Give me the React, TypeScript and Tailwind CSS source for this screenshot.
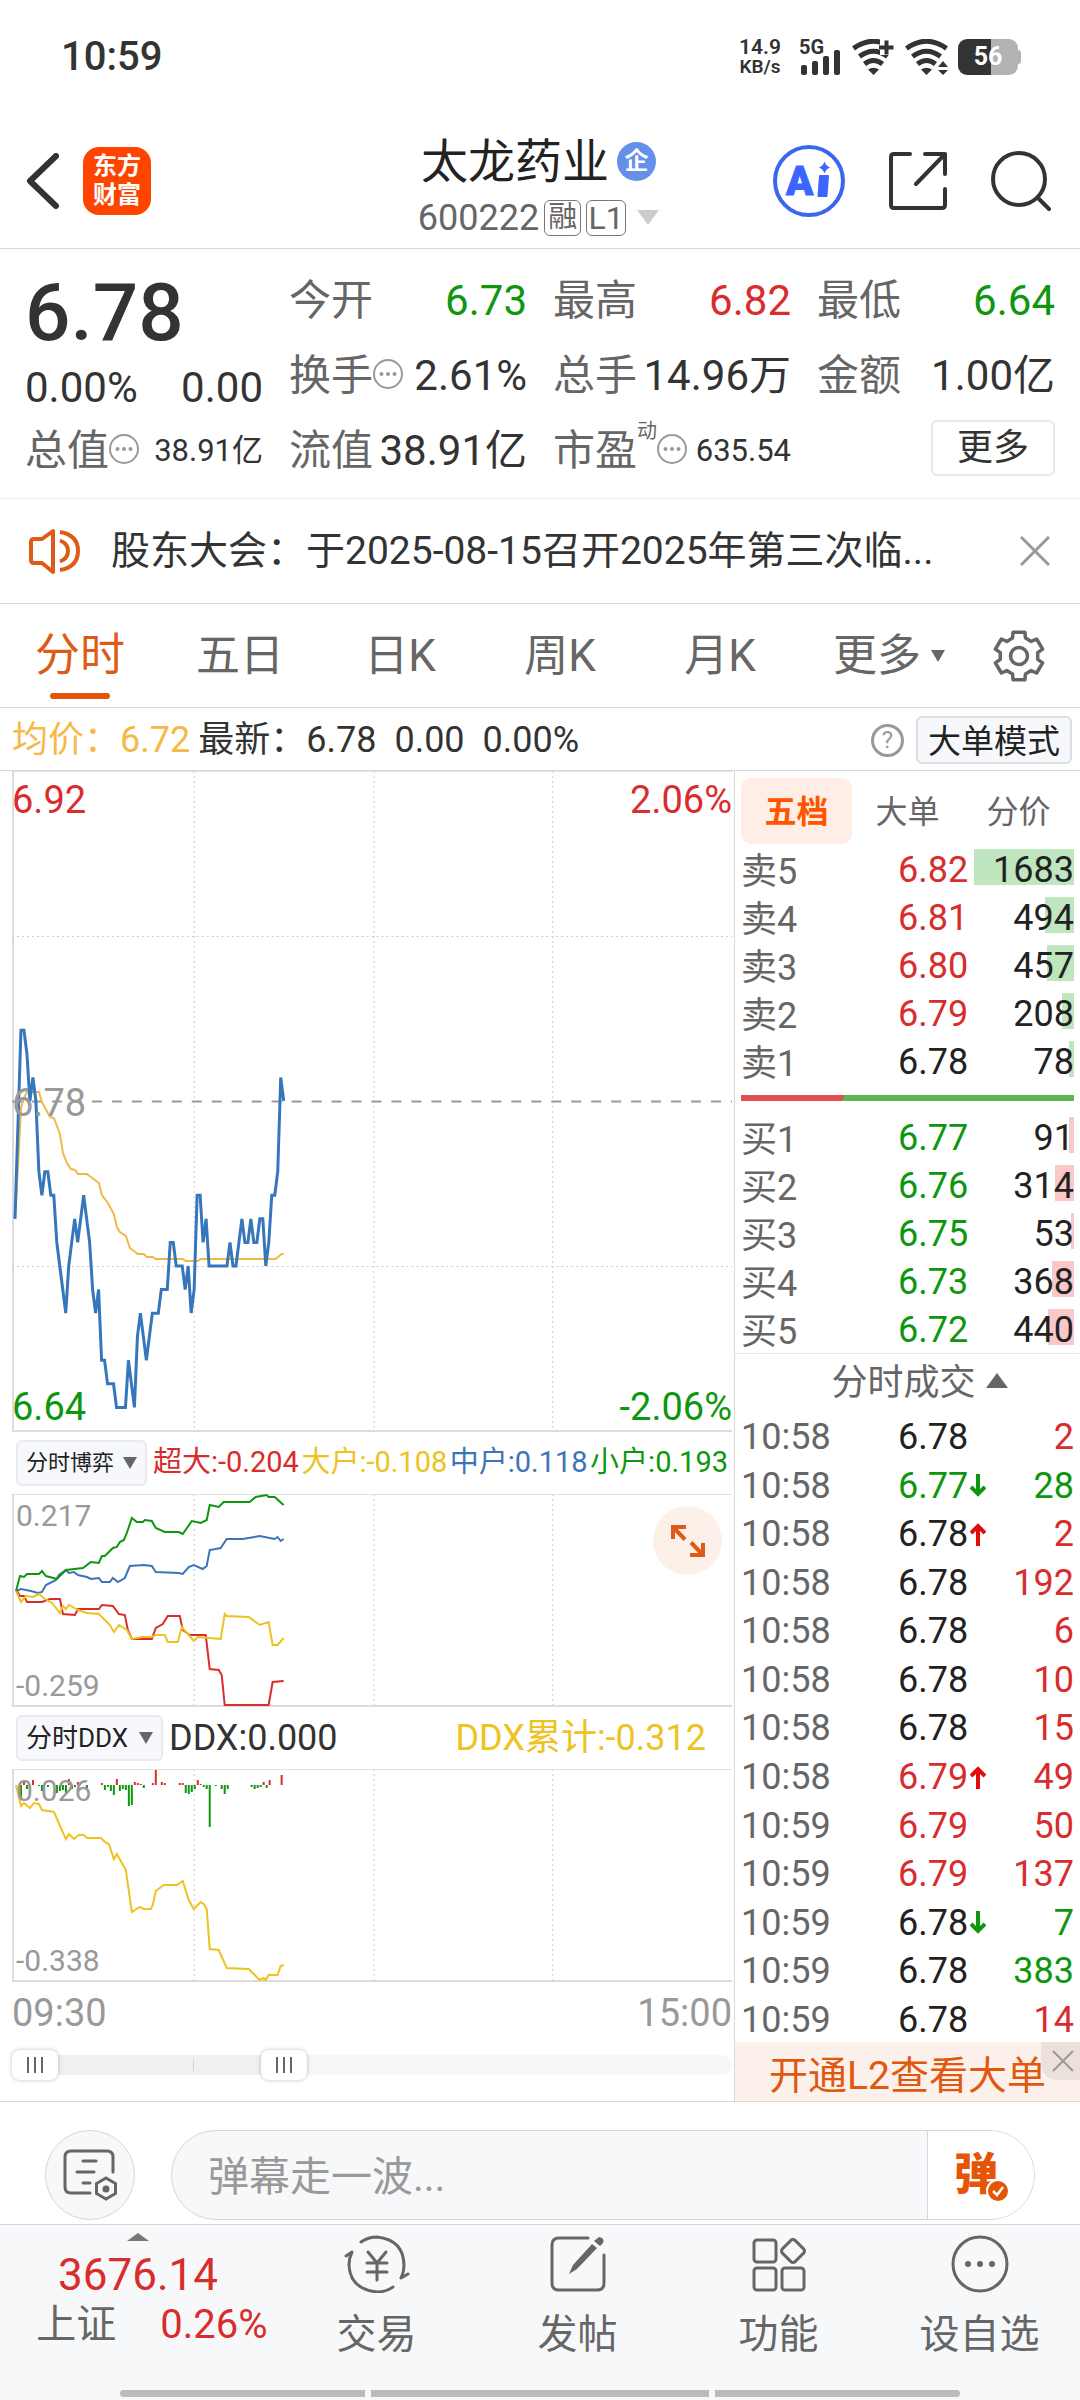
import { useState, type ReactNode } from "react";
import clsx from "clsx";

// cents away from the previous close (6.78), one entry per minute from 09:30
const PRICES = [
  -5, -1, 3, 3, 2, 0, 1, 0, -3, -4, -3, -3, -4, -4, -6, -7, -8, -9, -7, -6,
  -5, -6, -5, -4, -5, -6, -8, -9, -8, -11, -11, -12, -12, -12, -13, -13, -13, -13, -11, -12,
  -13, -10, -9, -10, -11, -10, -9, -9, -9, -8, -8, -8, -6, -6, -7, -7, -7, -8, -7, -9,
  -8, -4, -4, -6, -5, -7, -7, -7, -7, -7, -7, -7, -6, -7, -7, -6, -5, -6, -6, -5,
  -6, -6, -5, -5, -7, -6, -4, -4, -3, 1, 0,
];

const AVG =
  "3,448 6,396 9,337 12,327 15,321 27,321 30,331 38,346 42,347 48,363 51,382 55,392 59,398 63,399 66,403 75,403 87,412 90,424 96,432 102,443 105,456 108,461 114,465 118,477 126,483 132,483 135,486 141,486 144,488 171,488 174,490 186,490 189,488 264,488 270,483 272,483";

const FLOWS = [
  { color: "#3b74b8", points: "4,97 9,95 19,97 26,99 30,98 34,91 44,86 47,81 54,76 57,79 62,78 66,81 75,83 79,85 87,84 90,88 98,88 101,84 106,88 113,84 118,72 132,71 140,72 144,78 167,79 171,80 177,73 182,71 191,75 195,72 198,56 209,54 215,45 231,45 248,42 263,45 266,43 269,47 272,45" },
  { color: "#d92c2c", points: "5,97 8,102 12,102 15,108 30,108 38,105 48,105 51,120 63,121 66,115 87,115 90,111 101,112 107,120 113,121 116,136 120,145 140,145 144,134 151,130 156,122 168,122 171,136 178,141 194,141 198,175 207,176 210,181 213,211 257,211 261,188 272,187" },
  { color: "#eec21f", points: "4,97 9,108 14,102 21,103 27,100 33,105 40,109 48,119 51,112 54,115 57,111 66,116 75,119 87,120 93,126 98,131 102,138 107,131 115,136 120,145 130,143 140,143 144,141 153,141 156,148 166,148 170,133 177,141 182,147 186,143 209,145 213,120 215,122 237,123 248,131 257,128 261,151 266,151 272,144" },
  { color: "#0f960f", points: "4,97 8,82 12,83 15,80 27,80 30,77 34,82 45,85 54,76 71,74 79,68 87,69 90,62 93,62 101,54 105,53 108,48 112,46 115,39 120,24 125,28 131,28 133,26 140,27 144,34 153,38 167,38 171,40 180,27 189,29 195,26 198,11 207,13 212,8 238,8 244,3 255,1 257,3 263,3 272,11" },
];

const DDX_SUM =
  "4,16 9,37 12,34 18,39 22,34 27,35 30,41 42,43 46,52 48,57 54,70 57,65 62,70 67,66 72,66 75,69 89,69 93,73 97,75 102,90 105,85 114,101 120,143 128,138 132,140 139,140 141,136 144,122 152,116 165,116 171,112 177,131 182,140 189,133 192,135 195,140 198,180 207,181 215,199 237,200 243,206 248,211 252,209 254,211 257,206 266,206 269,197 272,196";

// [x, height], negative heights hang below the zero line
const DDX_BARS = [
  [9, -14], [12, 3], [15, -4], [18, -3], [21, 5], [27, -1], [30, -6], [36, -2], [45, -8], [48, -6],
  [51, -5], [54, -8], [57, 6], [60, -4], [63, -2], [66, 3], [75, -3], [90, 2], [93, -5], [96, -2],
  [99, -6], [102, -10], [105, 6], [108, -6], [111, -4], [114, -5], [117, -21], [120, -20], [123, 3],
  [126, 2], [129, 1], [132, -3], [141, 2], [144, 15], [150, 3], [153, 2], [168, 2], [171, 2],
  [174, -8], [177, -9], [180, -7], [183, -4], [186, 5], [189, 1], [192, -2], [195, -4], [198, -42],
  [204, -1], [210, -4], [213, -9], [216, -4], [240, -2], [243, -4], [246, -3], [249, -2], [252, 3],
  [255, -3], [258, 5], [270, 10],
];

const RED = "text-[#d92c2c]";
const GREEN = "text-[#0f960f]";
const DARK = "text-[#222]";

const SELLS = [
  { name: "卖5", price: "6.82", vol: 1683, tone: RED },
  { name: "卖4", price: "6.81", vol: 494, tone: RED },
  { name: "卖3", price: "6.80", vol: 457, tone: RED },
  { name: "卖2", price: "6.79", vol: 208, tone: RED },
  { name: "卖1", price: "6.78", vol: 78, tone: DARK },
];

const BUYS = [
  { name: "买1", price: "6.77", vol: 91, tone: GREEN },
  { name: "买2", price: "6.76", vol: 314, tone: GREEN },
  { name: "买3", price: "6.75", vol: 53, tone: GREEN },
  { name: "买4", price: "6.73", vol: 368, tone: GREEN },
  { name: "买5", price: "6.72", vol: 440, tone: GREEN },
];

const TICKS = [
  { time: "10:58", price: "6.78", vol: 2, tone: DARK, volTone: RED },
  { time: "10:58", price: "6.77", vol: 28, tone: GREEN, volTone: GREEN, dir: "down" },
  { time: "10:58", price: "6.78", vol: 2, tone: DARK, volTone: RED, dir: "up" },
  { time: "10:58", price: "6.78", vol: 192, tone: DARK, volTone: RED },
  { time: "10:58", price: "6.78", vol: 6, tone: DARK, volTone: RED },
  { time: "10:58", price: "6.78", vol: 10, tone: DARK, volTone: RED },
  { time: "10:58", price: "6.78", vol: 15, tone: DARK, volTone: RED },
  { time: "10:58", price: "6.79", vol: 49, tone: RED, volTone: RED, dir: "up" },
  { time: "10:59", price: "6.79", vol: 50, tone: RED, volTone: RED },
  { time: "10:59", price: "6.79", vol: 137, tone: RED, volTone: RED },
  { time: "10:59", price: "6.78", vol: 7, tone: DARK, volTone: GREEN, dir: "down" },
  { time: "10:59", price: "6.78", vol: 383, tone: DARK, volTone: GREEN },
  { time: "10:59", price: "6.78", vol: 14, tone: DARK, volTone: RED },
];

export default function App() {
  return (
    <div className="flex flex-col bg-white font-['Roboto','Noto_Sans_CJK_SC',sans-serif] leading-none text-[#333]">
      <StatusBar />
      <Header />
      <Stats />
      <Notice />
      <PeriodTabs />

      {/* average / latest line */}
      <div className="flex h-[63px] items-center border-b border-[#d8d8d8] pt-0.5 pr-2 pl-3 text-4xl leading-none whitespace-pre">
        <span className="text-[#f5b947]">均价：6.72</span>
        <span className="ml-2">最新：6.78</span>
        <span className="ml-[18px]">0.00</span>
        <span className="ml-[18px]">0.00%</span>
        <button aria-label="帮助" className="ml-auto flex size-[33px] items-center justify-center rounded-full border-3 border-[#999] text-2xl leading-none text-[#999]">
          ?
        </button>
        <button className="ml-3 h-12 rounded-md border-2 border-[#dcdee2] bg-[#f7f8fb] px-2.5 pt-0.5 text-[33px] text-[#222]">
          大单模式
        </button>
      </div>

      <main className="flex">
        <Charts />
        <OrderBook />
      </main>

      <BulletBar />
      <BottomNav />
    </div>
  );
}

function StatusBar() {
  return (
    <div className="flex h-[114px] items-center pr-[59px] pl-[61px]">
      <span className="text-[40px] font-medium">10:59</span>
      <div className="ml-auto flex h-9 items-center">
        <div className="flex flex-col items-center gap-px font-semibold">
          <span className="text-[21px] leading-[19px]">14.9</span>
          <span className="text-[19px] leading-[18px]">KB/s</span>
        </div>
        <div className="relative ml-[18px] h-9 w-[41px]">
          <span className="absolute -top-0.5 left-0 text-xl leading-5 font-bold">5G</span>
          <svg viewBox="0 0 41 36" className="size-full" fill="#333">
            <rect x="2" y="26" width="6" height="10" rx="2" />
            <rect x="13" y="22" width="6" height="14" rx="2" />
            <rect x="24" y="17" width="6" height="19" rx="2" />
            <rect x="35" y="11" width="6" height="25" rx="2" />
          </svg>
        </div>
        <Wifi className="ml-3">
          <path d="M28 0h16v16H28z" fill="#fff" />
          <path d="M27 8.500h14.500M34.500 1.500v14" stroke="#333" strokeWidth="4" />
        </Wifi>
        <Wifi className="ml-[9px]">
          <path d="M32 20h12v16H32z" fill="#fff" />
          <path d="M38 22l5 6H33zM38 36l5-5H33z" fill="#333" />
        </Wifi>
        <div className="ml-[9px] flex items-center">
          <span className="h-9 w-15 rounded-[9px] bg-[linear-gradient(90deg,#333_55%,#b3b3b3_55%)] text-center text-[25px] leading-9 font-bold text-white">
            56
          </span>
          <span className="h-3.5 w-[3px] rounded-r bg-[#b3b3b3]" />
        </div>
      </div>
    </div>
  );
}

function Wifi({ className, children }: { className: string; children: ReactNode }) {
  return (
    <svg viewBox="0 0 44 36" className={clsx("h-9 w-11", className)} fill="none">
      <g stroke="#333" strokeWidth="5">
        <path d="M1.500 9.500Q21.500-5 41.500 9.500" />
        <path d="M7.500 17.500Q21.500 7 35.500 17.500" />
        <path d="M12.500 25Q21.500 18 30.500 25" />
      </g>
      <path d="M16 30.500Q21.500 27 27 30.500L21.500 36z" fill="#333" />
      {children}
    </svg>
  );
}

function Header() {
  return (
    <header className="grid h-[135px] grid-cols-[1fr_auto_1fr] items-center border-b border-[#d8d8d8] pr-[29px] pl-[26px]">
      <div className="flex items-center gap-6">
        <button aria-label="返回">
          <svg viewBox="0 0 33 56" className="h-14 w-[33px]" fill="none" stroke="#333" strokeWidth="6" strokeLinecap="round" strokeLinejoin="round">
            <path d="M30 3 4 28l26 25" />
          </svg>
        </button>
        <div className="flex size-[68px] flex-col items-center justify-center rounded-2xl bg-[#ff4400] text-2xl leading-[29px] font-bold text-white">
          <span>东方</span>
          <span>财富</span>
        </div>
      </div>

      <div className="flex flex-col items-center gap-[15px] pt-[11px]">
        <h1 className="flex items-center gap-2 text-[47px] text-[#222]">
          太龙药业
          <span className="flex size-[39px] items-center justify-center rounded-full bg-[#6590ea] text-2xl font-bold text-white">
            企
          </span>
        </h1>
        <div className="flex h-9 items-center gap-[5px] text-4xl leading-none text-[#666]">
          600222
          <span className="flex h-9 w-[37px] items-center justify-center rounded-md border border-[#777] text-[29px]">融</span>
          <span className="flex h-9 w-10 items-center justify-center rounded-md border border-[#777] text-[32px]">L1</span>
          <svg viewBox="0 0 22 15" className="ml-1.5 h-[15px] w-[22px]" fill="#ccc">
            <path d="M0 0h22L11 15z" />
          </svg>
        </div>
      </div>

      <div className="flex items-center justify-end gap-11">
        <button aria-label="Ai">
          <svg viewBox="0 0 72 74" className="h-[74px] w-[72px]">
            <circle cx="36" cy="37" r="34" fill="none" stroke="#3a66f0" strokeWidth="4" />
            <text x="13" y="51" fontSize="40" fontWeight="900" fill="#3a66ff" stroke="#3a66ff" strokeWidth="1">A</text>
            <path d="M47 32h8L53.500 52h-8z" fill="#3a66ff" stroke="#3a66ff" strokeWidth="2" strokeLinejoin="round" />
            <path d="M51.500 17.500q1.500 4.500 5.500 6-4 1.500-5.500 6-1.500-4.500-5.500-6 4-1.500 5.500-6z" fill="#3a66ff" />
          </svg>
        </button>
        <button aria-label="分享">
          <svg viewBox="0 0 58 60" className="h-[60px] w-[58px]" fill="none" stroke="#333" strokeWidth="4" strokeLinecap="round" strokeLinejoin="round">
            <path d="M21 3H5q-3 0-3 3v48q0 3 3 3h48q3 0 3-3V38M36 3h20v20M56 3 27 33" />
          </svg>
        </button>
        <button aria-label="搜索">
          <svg viewBox="0 0 60 62" className="h-[62px] w-[60px]" fill="none" stroke="#333" strokeWidth="4" strokeLinecap="round">
            <circle cx="28" cy="29" r="26" />
            <path d="m47 48 11 11" />
          </svg>
        </button>
      </div>
    </header>
  );
}

function MoreDot() {
  return (
    <svg viewBox="0 0 30 30" className="mb-1 size-[30px] shrink-0" fill="#999">
      <circle cx="15" cy="15" r="14" fill="none" stroke="#999" strokeWidth="2" />
      <circle cx="8.500" cy="15" r="2" />
      <circle cx="15" cy="15" r="2" />
      <circle cx="21.500" cy="15" r="2" />
    </svg>
  );
}

function Stat({ label, value, tone = "text-[#333]", dot, small }: {
  label: string; value: string; tone?: string; dot?: boolean; small?: boolean;
}) {
  return (
    <div className="flex h-[75px] items-center text-[42px] whitespace-nowrap">
      <span className="text-[#666]">{label}</span>
      {dot && <MoreDot />}
      <span className={clsx("ml-auto", small && "text-[31px]", tone)}>{value}</span>
    </div>
  );
}

function Stats() {
  return (
    <section className="grid h-[250px] grid-cols-4 gap-x-[26px] border-b border-[#eee] px-[25px] pt-[14px]">
      <div>
        <div className="flex h-[100px] items-center text-[80px] font-medium">6.78</div>
        <div className="flex h-[50px] items-center justify-between text-[42px]">
          <span>0.00%</span>
          <span>0.00</span>
        </div>
        <Stat label="总值" value="38.91亿" dot small />
      </div>
      <div>
        <Stat label="今开" value="6.73" tone={GREEN} />
        <Stat label="换手" value="2.61%" dot />
        <Stat label="流值" value="38.91亿" />
      </div>
      <div>
        <Stat label="最高" value="6.82" tone={RED} />
        <Stat label="总手" value="14.96万" />
        <div className="flex h-[75px] items-center text-[42px] whitespace-nowrap">
          <span className="text-[#666]">市盈</span>
          <sup className="top-0 self-start pt-2 text-xl leading-none text-[#666]">动</sup>
          <MoreDot />
          <span className="ml-auto text-[31px]">635.54</span>
        </div>
      </div>
      <div>
        <Stat label="最低" value="6.64" tone={GREEN} />
        <Stat label="金额" value="1.00亿" />
        <div className="flex h-[75px] items-center justify-end pb-1.5">
          <button className="h-14 w-[124px] rounded-md border-2 border-[#e8e8e8] text-4xl leading-none">更多</button>
        </div>
      </div>
    </section>
  );
}

function Notice() {
  return (
    <section className="flex h-[105px] items-center border-b border-[#d8d8d8] pr-[30px] pl-[29px]">
      <svg viewBox="0 0 52 46" className="h-[46px] w-[52px] shrink-0" fill="none" stroke="#dd5b16" strokeWidth="4">
        <path d="M24 3v41l-11-9H5q-3 0-3-3V14q0-3 3-3h8L24 3z" strokeLinejoin="round" />
        <path d="M31 12.500q8 3 8 10.500t-8 10.500M31 4q18 3 18 19T31 42" />
      </svg>
      <p className="ml-[30px] truncate text-[39px] leading-[60px]">股东大会：于2025-08-15召开2025年第三次临...</p>
      <button aria-label="关闭" className="ml-auto">
        <svg viewBox="0 0 30 30" className="size-[30px]" fill="none" stroke="#999" strokeWidth="3">
          <path d="m1 1 28 28M29 1 1 29" />
        </svg>
      </button>
    </section>
  );
}

// six-tooth cog outline
const gearPath = (() => {
  const pt = (deg: number, r: number) => {
    const a = (deg * Math.PI) / 180;
    return `${(26 + r * Math.cos(a)).toFixed(1)} ${(26 + r * Math.sin(a)).toFixed(1)}`;
  };
  const pts: string[] = [];
  for (let i = 0; i < 6; i++) {
    const c = i * 60 - 90;
    pts.push(pt(c - 20, 19), pt(c - 14, 24.5), pt(c + 14, 24.5), pt(c + 20, 19));
  }
  return `M${pts.join("L")}Z`;
})();

function PeriodTabs() {
  const [active, setActive] = useState("分时");
  return (
    <nav className="flex h-[104px] border-b border-[#d8d8d8] pr-[21px] text-[44px] text-[#666]">
      {["分时", "五日", "日K", "周K", "月K"].map(t => (
        <button
          key={t}
          onClick={() => setActive(t)}
          className={clsx("relative flex-[160]", t === active && "text-[45px] text-[#dd5b16]")}
        >
          {t}
          {t === active && <span className="absolute bottom-2 left-1/2 h-1.5 w-15 -translate-x-1/2 rounded-full bg-[#e0550a]" />}
        </button>
      ))}
      <button className="flex flex-[178] items-center justify-center gap-2.5">
        更多
        <svg viewBox="0 0 14 12" className="h-3 w-3.5" fill="#666">
          <path d="M0 0h14L7 12z" />
        </svg>
      </button>
      <button aria-label="设置" className="flex flex-[81] items-center justify-center">
        <svg viewBox="0 0 52 52" className="size-[52px]" fill="none" stroke="#666" strokeWidth="3.500" strokeLinejoin="round">
          <path d={gearPath} />
          <circle cx="26" cy="26" r="8.500" />
        </svg>
      </button>
    </nav>
  );
}

function Plot({ height, className, children }: { height: number; className: string; children: ReactNode }) {
  return (
    <svg viewBox={`0 0 721 ${height}`} preserveAspectRatio="none" fill="none" className={clsx("block w-full overflow-visible", className)}>
      <g stroke="#ccc" strokeDasharray="2 3">
        <path d={`M182.500 0v${height}M362.500 0v${height}M541.500 0v${height}`} />
      </g>
      <path d="M0 .5h721" stroke="#e2e2e2" />
      <path d={`M1 0v${height}M0 ${height}h721`} stroke="#dcdcdc" strokeWidth="2" />
      {children}
    </svg>
  );
}

function IndicatorSelect({ label, options, className }: { label: string; options: string[]; className: string }) {
  return (
    <label className="relative flex h-[46px] shrink-0 items-center">
      <select
        aria-label={label}
        className={clsx("h-full appearance-none rounded-md border-2 border-[#e8eaee] bg-[#f7f8fb] pr-[30px] pl-2 leading-none text-[#222]", className)}
      >
        {options.map(o => <option key={o}>{o}</option>)}
      </select>
      <svg viewBox="0 0 14 12" className="pointer-events-none absolute right-2.5 h-3 w-3.5" fill="#666">
        <path d="M0 0h14L7 12z" />
      </svg>
    </label>
  );
}

function Charts() {
  const line = PRICES.map((p, i) => `${(i + 1) * 2.99},${330 - p * 23.57}`).join(" ");
  return (
    <section className="min-w-0 flex-1 pr-0.5 pl-3">
      {/* price */}
      <div className="relative text-[38px] leading-10">
        <Plot height={660} className="h-[660px]">
          <path d="M0 165.500h721M0 495.500h721" stroke="#ccc" strokeDasharray="2 3" />
          <path d="M0 330.500h721" stroke="#999" strokeWidth="2" strokeDasharray="10 10" />
          <polyline points={AVG} stroke="#efb94a" strokeWidth="2" />
          <polyline points={line} stroke="#3676bb" strokeWidth="3" />
        </Plot>
        <span className={clsx("absolute top-[9px] left-0", RED)}>6.92</span>
        <span className={clsx("absolute top-[9px] right-0", RED)}>2.06%</span>
        <span className="absolute top-[312px] left-0 text-[#999]">6.78</span>
        <span className={clsx("absolute bottom-1 left-0", GREEN)}>6.64</span>
        <span className={clsx("absolute right-0 bottom-1", GREEN)}>-2.06%</span>
      </div>

      {/* money flow */}
      <div className="flex h-[63px] items-center gap-1.5 pr-1 pl-1 text-[29px] whitespace-nowrap">
        <IndicatorSelect label="指标一" options={["分时博弈", "分时DDX"]} className="text-[22px]" />
        <div className="flex flex-1 justify-between">
          <span className={RED}>超大:-0.204</span>
          <span className="text-[#eec21f]">大户:-0.108</span>
          <span className="text-[#3b74b8]">中户:0.118</span>
          <span className={GREEN}>小户:0.193</span>
        </div>
      </div>
      <div className="relative text-3xl leading-8 text-[#999]">
        <Plot height={212} className="h-[212px]">
          {FLOWS.map(f => <polyline key={f.color} points={f.points} stroke={f.color} strokeWidth="2" />)}
        </Plot>
        <span className="absolute top-1.5 left-1">0.217</span>
        <span className="absolute bottom-1 left-1">-0.259</span>
        <button aria-label="展开" className="absolute top-3 right-2.5 flex size-[69px] items-center justify-center rounded-full bg-[#fdf0e9]">
          <svg viewBox="0 0 36 36" className="size-9" fill="none" stroke="#dd5b16" strokeWidth="4">
            <path d="M3 16V4h13M3.500 4.500 15 16.500M33 20v12H20M32.500 31.500 21 19.500" />
          </svg>
        </button>
      </div>

      {/* DDX */}
      <div className="flex h-[63px] items-center pr-[26px] pl-1 text-4xl leading-none whitespace-nowrap">
        <IndicatorSelect label="指标二" options={["分时DDX", "分时博弈"]} className="text-[26px]" />
        <span className="ml-1.5">DDX:0.000</span>
        <span className="ml-auto text-[#eec21f]">DDX累计:-0.312</span>
      </div>
      <div className="relative text-3xl leading-8 text-[#999]">
        <Plot height={212} className="h-[212px]">
          {DDX_BARS.map(([x, h]) => (
            <rect key={x} x={x - 1} y={h > 0 ? 16 - h : 16} width="2" height={Math.abs(h)} fill={h > 0 ? "#d92c2c" : "#0f960f"} />
          ))}
          <polyline points={DDX_SUM} stroke="#eec21f" strokeWidth="2" />
        </Plot>
        <span className="absolute top-1.5 left-1">0.026</span>
        <span className="absolute bottom-1 left-1">-0.338</span>
      </div>

      <div className="flex h-[62px] items-center justify-between pt-0.5 text-[38px] text-[#999]">
        <span>09:30</span>
        <span>15:00</span>
      </div>
      <RangeSlider />
    </section>
  );
}

const thumb =
  "pointer-events-none absolute inset-0 m-0 h-full w-full appearance-none bg-transparent [&::-webkit-slider-thumb]:pointer-events-auto [&::-webkit-slider-thumb]:h-[30px] [&::-webkit-slider-thumb]:w-[46px] [&::-webkit-slider-thumb]:appearance-none [&::-webkit-slider-thumb]:rounded-lg [&::-webkit-slider-thumb]:shadow-[0_0_4px_rgba(0,0,0,0.25)] [&::-webkit-slider-thumb]:[background:#fff_repeating-linear-gradient(90deg,#666_0_2px,transparent_2px_7px)_center/16px_16px_no-repeat]";

function RangeSlider() {
  const [from, setFrom] = useState(0);
  const [to, setTo] = useState(37);
  return (
    <div className="relative mb-[14px] flex h-11 items-center">
      <div className="h-5 w-full overflow-hidden rounded-full bg-[#f7f7fa]">
        <div className="flex h-full items-center justify-center bg-[#f0f0f3]" style={{ marginLeft: `${from}%`, width: `${to - from}%` }}>
          <span className="ml-24 h-3 w-px bg-[#d0d0d0]" />
        </div>
      </div>
      <input type="range" aria-label="开始时间" value={from} onChange={e => setFrom(Math.min(+e.target.value, to))} className={thumb} />
      <input type="range" aria-label="结束时间" value={to} onChange={e => setTo(Math.max(+e.target.value, from))} className={thumb} />
    </div>
  );
}

function BookRows({ rows, bar }: { rows: typeof SELLS; bar: string }) {
  return (
    <table className="w-full table-fixed text-4xl leading-9">
      <tbody>
        {rows.map(r => (
          <tr key={r.name} className="h-12">
            <th scope="row" className="w-[157px] p-0 pt-1.5 text-left font-normal text-[#666]">{r.name}</th>
            <td className={clsx("w-[76px] p-0 pt-0.5", r.tone)}>{r.price}</td>
            <td className="relative p-0 pt-0.5 text-right text-[#222]">
              <span className={clsx("absolute top-1 right-0 h-9", bar)} style={{ width: `${r.vol / 16.83}%` }} />
              <span className="relative">{r.vol}</span>
            </td>
          </tr>
        ))}
      </tbody>
    </table>
  );
}

function TickArrow({ dir }: { dir: string }) {
  const up = dir === "up";
  return (
    <svg viewBox="0 0 16 24" className="ml-0.5 inline h-6 w-4 align-baseline" fill="none" stroke={up ? "#e00d0d" : "#0f960f"} strokeWidth="4">
      <path d={up ? "M8 24V4M1 11l7-7 7 7" : "M8 0v20M1 13l7 7 7-7"} />
    </svg>
  );
}

function OrderBook() {
  const [tab, setTab] = useState("五档");
  return (
    <aside className="flex w-[346px] flex-col border-l border-[#d8d8d8]">
      <div className="px-1.5">
        <div className="grid h-[74px] grid-cols-3 items-center pt-1.5 text-[32px]">
          {["五档", "大单", "分价"].map(t => (
            <button
              key={t}
              onClick={() => setTab(t)}
              className={clsx("h-[66px] rounded-[10px] pt-0.5", t === tab ? "bg-[#ffeee6] font-bold text-[#ff5500]" : "text-[#666]")}
            >
              {t}
            </button>
          ))}
        </div>
        <BookRows rows={SELLS} bar="bg-[#bfe6bf]" />
        <div className="mt-2.5 mb-3 h-1.5 bg-[linear-gradient(120deg,#e05252_31%,#5cb84c_31%)]" />
        <BookRows rows={BUYS} bar="bg-[#fac8c8]" />
      </div>

      <button className="flex h-[58px] items-center justify-center gap-2.5 border-t border-[#e8e8e8] text-4xl leading-none text-[#666]">
        <span className="pl-6">分时成交</span>
        <svg viewBox="0 0 22 15" className="mb-1 h-[15px] w-[22px]" fill="#666">
          <path d="M11 0 22 15H0z" />
        </svg>
      </button>
      <div className="px-1.5">
        <table className="h-[631px] w-full table-fixed text-4xl leading-9">
          <tbody>
            {TICKS.map((t, i) => (
              <tr key={i}>
                <td className="w-[157px] p-0 pt-1 text-[#666]">{t.time}</td>
                <td className={clsx("w-[96px] p-0 pt-1 whitespace-nowrap", t.tone)}>
                  {t.price}
                  {t.dir && <TickArrow dir={t.dir} />}
                </td>
                <td className={clsx("p-0 pt-1 text-right", t.volTone)}>{t.vol}</td>
              </tr>
            ))}
          </tbody>
        </table>
      </div>

      <div className="relative flex flex-1 bg-[#fcf0ea]">
        <a href="#l2" className="flex flex-1 items-center justify-center pt-2.5 text-[39px] text-[#e0570f]">开通L2查看大单</a>
        <button aria-label="关闭广告" className="absolute top-0 right-0 flex h-[38px] w-[39px] items-center justify-center rounded-bl-2xl bg-[#ebe0da] pl-1">
          <svg viewBox="0 0 22 22" className="size-[22px]" fill="none" stroke="#999" strokeWidth="2">
            <path d="m1 1 20 20M21 1 1 21" />
          </svg>
        </button>
      </div>
    </aside>
  );
}

function BulletBar() {
  return (
    <div className="flex h-[123px] items-end gap-9 border-t border-[#d4d7db] pr-[45px] pb-1 pl-[45px]">
      <button aria-label="弹幕设置" className="flex size-[90px] items-center justify-center rounded-full border border-[#d4d7db] bg-[#f7f8fa]">
        <svg viewBox="0 0 56 54" className="h-[54px] w-14" fill="none" stroke="#666" strokeWidth="3" strokeLinecap="round">
          <path d="M51 24V9q0-6-6-6H9Q3 3 3 9v30q0 6 6 6h19" />
          <path d="M21 13h13M15 24h17M21 35h7" />
          <path d="m44 30 9.500 5.500v10L44 51l-9.500-5.500v-10z" />
          <circle cx="44" cy="41" r="2" fill="#666" />
        </svg>
      </button>
      <div className="flex h-[90px] min-w-0 flex-1 overflow-hidden rounded-full border border-[#d4d7db] bg-[#f7f8fa]">
        <input aria-label="弹幕" placeholder="弹幕走一波..." className="min-w-0 flex-1 bg-transparent pt-1 pl-9 text-[41px] outline-none placeholder:text-[#999]" />
        <button aria-label="发送弹幕" className="relative w-[107px] border-l border-[#d4d7db] bg-white pr-2.5 text-[44px] font-black text-[#e65506]">
          弹
          <svg viewBox="0 0 24 24" className="absolute right-6 bottom-4 size-6" fill="none">
            <circle cx="12" cy="12" r="11" fill="#e65506" stroke="#fff" strokeWidth="2" />
            <path d="m7 12 4 4 6-8" stroke="#fff" strokeWidth="2.500" />
          </svg>
        </button>
      </div>
    </div>
  );
}

function NavItem({ label, children }: { label: string; children: ReactNode }) {
  return (
    <button className="flex flex-[201] flex-col items-center pt-2.5 text-[40px] text-[#666]">
      <svg viewBox="0 0 66 58" className="h-[58px] w-[66px]" fill="none" stroke="#666" strokeWidth="3" strokeLinecap="round">
        {children}
      </svg>
      <span className="mt-[22px]">{label}</span>
    </button>
  );
}

function BottomNav() {
  return (
    <footer className="border-t border-[#d4d7db] bg-[#f7f8fa]">
      <div className="flex h-[165px]">
        <button className="flex flex-[276] flex-col items-center pt-2">
          <svg viewBox="0 0 22 8" className="h-2 w-[22px]" fill="#777">
            <path d="M11 0 22 8H0z" />
          </svg>
          <span className={clsx("mt-3 text-[44px]", RED)}>3676.14</span>
          <span className="mt-2 flex items-center gap-11 pl-7 text-[40px] text-[#666]">
            上证
            <span className={RED}>0.26%</span>
          </span>
        </button>
        <NavItem label="交易">
          <path d="M17 7Q24 2 33 2q27 3 27 29 0 6-3 12l7-4M49 52q-7 5-16 5Q6 54 5 30q0-7 3-13l-6 4" strokeLinejoin="round" />
          <path d="m24 17 9 11 9-11M33 28v17M23 28h20M23 37h20" />
        </NavItem>
        <NavItem label="发帖">
          <path d="M43 3H14q-7 0-7 7v38q0 7 7 7h38q7 0 7-7V20" />
          <path d="m54 2q6 1 4 6l-3 3-6-5zM47 9l5 4-20 21-8 5 4-9z" fill="#666" stroke="none" />
        </NavItem>
        <NavItem label="功能">
          <rect x="8" y="5" width="22" height="22" rx="3" />
          <rect x="8" y="33" width="22" height="22" rx="3" />
          <rect x="36" y="33" width="22" height="22" rx="3" />
          <rect x="38" y="7" width="18" height="18" rx="3" transform="rotate(45 47 16)" />
        </NavItem>
        <NavItem label="设自选">
          <circle cx="33" cy="29" r="27" />
          <g fill="#666" stroke="none">
            <circle cx="21" cy="29" r="3" />
            <circle cx="33" cy="29" r="3" />
            <circle cx="45" cy="29" r="3" />
          </g>
        </NavItem>
      </div>
      <div className="flex gap-1.5 px-[120px] pb-[3px]">
        <span className="h-[7px] flex-[245] rounded-l-full bg-[#b9bbbd]" />
        <span className="h-[7px] flex-[338] bg-[#b9bbbd]" />
        <span className="h-[7px] flex-[245] rounded-r-full bg-[#b9bbbd]" />
      </div>
    </footer>
  );
}
